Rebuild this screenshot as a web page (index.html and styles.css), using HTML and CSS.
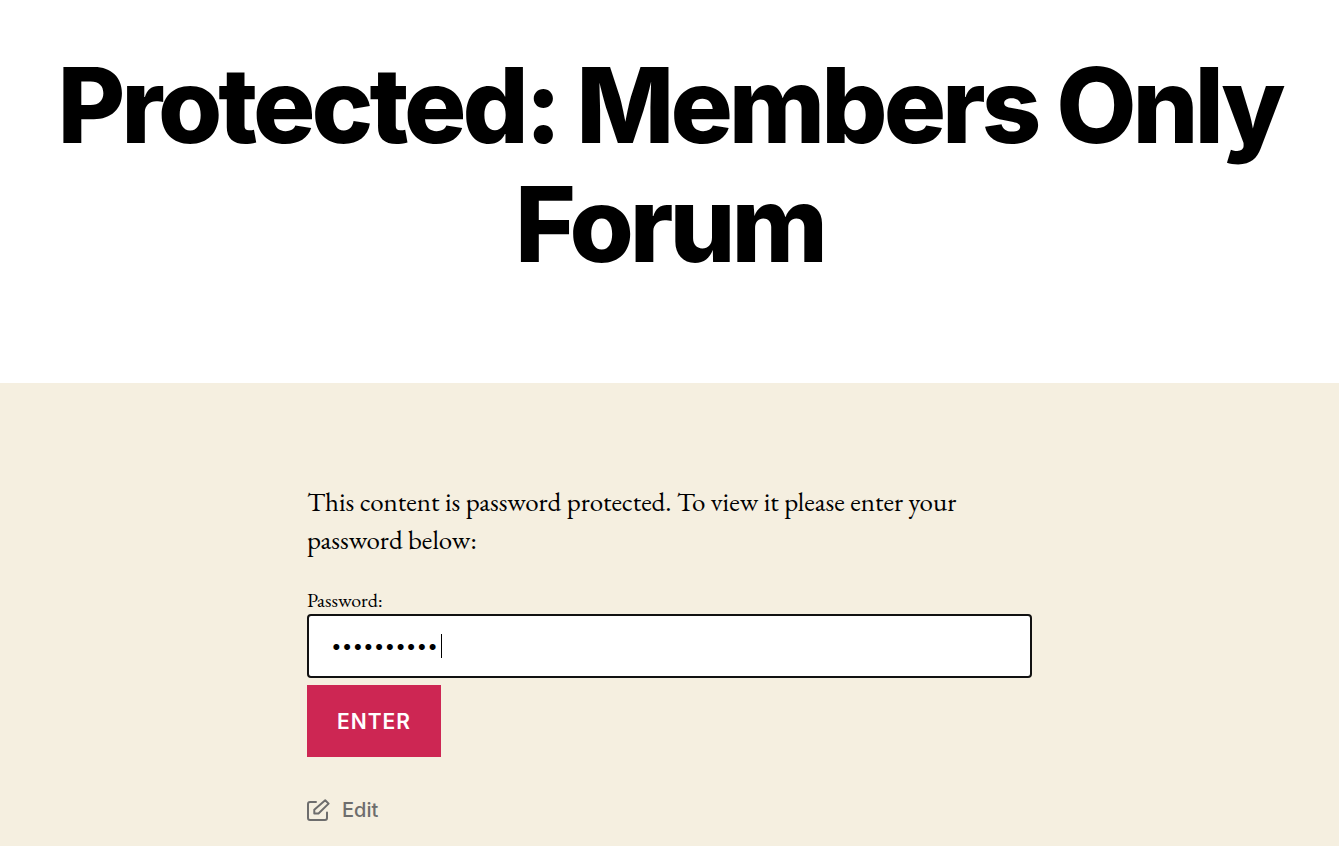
FILE: index.html
```html
<!DOCTYPE html>
<html lang="en">
<head>
<meta charset="utf-8">
<meta name="viewport" content="width=device-width, initial-scale=1">
<title>Protected: Members Only Forum</title>
<link rel="stylesheet" href="styles.css">
</head>
<body>
<header class="entry-header">
  <h1 class="entry-title">Protected: Members Only Forum</h1>
</header>
<main class="entry-content">
  <form class="password-form">
    <p class="intro">This content is password protected. To view it please enter your password below:</p>
    <label class="password-label" for="password">Password:</label>
    <div class="password-field">
      <input class="password-input" id="password" type="password" value="abcdefghij">
      <span class="caret"></span>
    </div>
    <button class="submit" type="submit">Enter</button>
  </form>
  <a class="edit-link" href="#edit">
    <svg class="edit-icon" viewBox="0 0 23 22" fill="none" stroke="currentColor" stroke-width="2" stroke-linejoin="round" stroke-linecap="round" aria-hidden="true">
      <path d="M9 3H3Q1 3 1 5V19Q1 21 3 21H18Q20 21 20 19V13.500"/>
      <path d="M18.200 1.200L21.600 4.600L11.500 14.500H7.300V10.700Z"/>
    </svg>
    <span>Edit</span>
  </a>
</main>
</body>
</html>
```

FILE: styles.css
```css
* {
  box-sizing: border-box;
}

body {
  margin: 0;
  background: #f5efe0;
  color: #000;
  font-family: "EB Garamond", Garamond, "Liberation Serif", serif;
}

.entry-header {
  padding: 46px 40px 99px;
  background: #fff;
}

.entry-title {
  margin: 0;
  font-family: Inter, sans-serif;
  font-size: 104px;
  font-weight: 800;
  line-height: 119px;
  letter-spacing: -4px;
  text-align: center;
}

.entry-content {
  max-width: 765px;
  margin: 0 auto;
  padding: 100px 20px 24px;
}

.intro {
  margin: 0 0 29px;
  font-size: 27px;
  line-height: 38px;
}

.password-label {
  display: block;
  font-size: 20px;
  line-height: 24px;
}

.password-field {
  position: relative;
  margin: 2px 0 7px;
}

.password-input {
  display: block;
  width: 100%;
  height: 64px;
  padding: 0 22px;
  border: 2px solid #111;
  border-radius: 4px;
  outline: none;
  background: #fff;
  color: #000;
  font-family: Inter, sans-serif;
  font-size: 19px;
}

.caret {
  position: absolute;
  top: 20px;
  left: 134px;
  width: 1px;
  height: 24px;
  background: #000;
}

.submit {
  display: block;
  height: 72px;
  padding: 0 30px;
  border: 0;
  background: #cd2653;
  color: #fff;
  font-family: Inter, sans-serif;
  font-size: 21px;
  font-weight: 600;
  letter-spacing: 1px;
  text-transform: uppercase;
}

.edit-link {
  display: inline-flex;
  align-items: center;
  gap: 12px;
  margin-top: 41px;
  color: #6d6d6d;
  font-family: Inter, sans-serif;
  font-size: 20px;
  font-weight: 500;
  line-height: 24px;
  text-decoration: none;
}

.edit-icon {
  width: 23px;
  height: 22px;
}
```
